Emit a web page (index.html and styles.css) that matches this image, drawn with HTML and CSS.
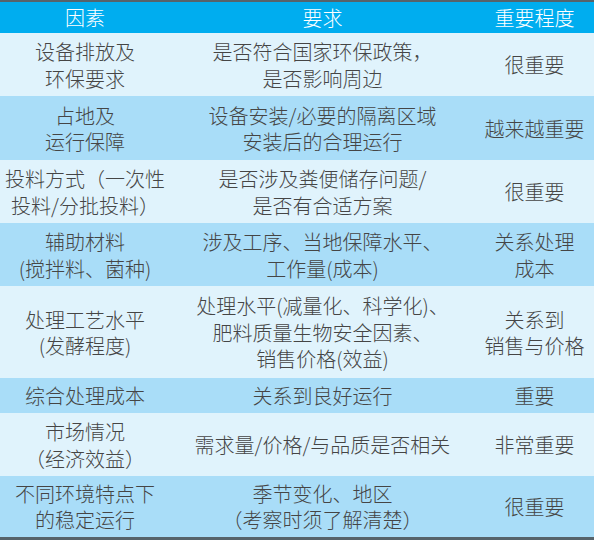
FILE: index.html
```html
<!DOCTYPE html>
<html lang="zh">
<head>
<meta charset="utf-8">
<link rel="stylesheet" href="styles.css">
</head>
<body>
<table class="factors">
  <colgroup>
    <col class="c1"><col class="c2"><col class="c3">
  </colgroup>
  <thead>
    <tr class="head"><th>因素</th><th>要求</th><th>重要程度</th></tr>
  </thead>
  <tbody>
    <tr class="light h63"><td>设备排放及<br>环保要求</td><td>是否符合国家环保政策，<br>是否影响周边</td><td>很重要</td></tr>
    <tr class="blue h64"><td>占地及<br>运行保障</td><td>设备安装/必要的隔离区域<br>安装后的合理运行</td><td>越来越重要</td></tr>
    <tr class="light h63"><td>投料方式（一次性<br>投料/分批投料）</td><td>是否涉及粪便储存问题/<br>是否有合适方案</td><td>很重要</td></tr>
    <tr class="blue h63"><td>辅助材料<br>(搅拌料、菌种)</td><td>涉及工序、当地保障水平、<br>工作量(成本)</td><td>关系处理<br>成本</td></tr>
    <tr class="light h92"><td>处理工艺水平<br>(发酵程度)</td><td>处理水平(减量化、科学化)、<br>肥料质量生物安全因素、<br>销售价格(效益)</td><td>关系到<br>销售与价格</td></tr>
    <tr class="blue h35"><td>综合处理成本</td><td>关系到良好运行</td><td>重要</td></tr>
    <tr class="light h63"><td>市场情况<br>（经济效益）</td><td>需求量/价格/与品质是否相关</td><td>非常重要</td></tr>
    <tr class="blue h62"><td>不同环境特点下<br>的稳定运行</td><td>季节变化、地区<br>（考察时须了解清楚）</td><td>很重要</td></tr>
  </tbody>
</table>
</body>
</html>
```
FILE: styles.css
```css
html, body {
  margin: 0;
  padding: 0;
  background: #ffffff;
}
.factors {
  width: 594px;
  border-collapse: collapse;
  table-layout: fixed;
  border-top: 2px solid #56636b;
  border-bottom: 3px solid #56636b;
  font-family: "Noto Sans CJK SC", "Noto Sans", sans-serif;
  font-size: 20px;
  font-weight: 300;
  line-height: 26.5px;
  color: #454545;
}
.c1 { width: 170px; }
.c2 { width: 305px; }
.c3 { width: 119px; }
.factors th, .factors td {
  padding: 2px 0 0;
  text-align: center;
  vertical-align: middle;
  white-space: nowrap;
}
.head {
  background: #00adef;
  height: 32px;
}
.head th {
  font-weight: 300;
  color: #ffffff;
}
.light { background: #e0f3fc; }
.blue { background: #a9ddf8; }
.h35 { height: 35px; }
.h62 { height: 62px; }
.h63 { height: 63px; }
.h64 { height: 64px; }
.h92 { height: 92px; }
```
